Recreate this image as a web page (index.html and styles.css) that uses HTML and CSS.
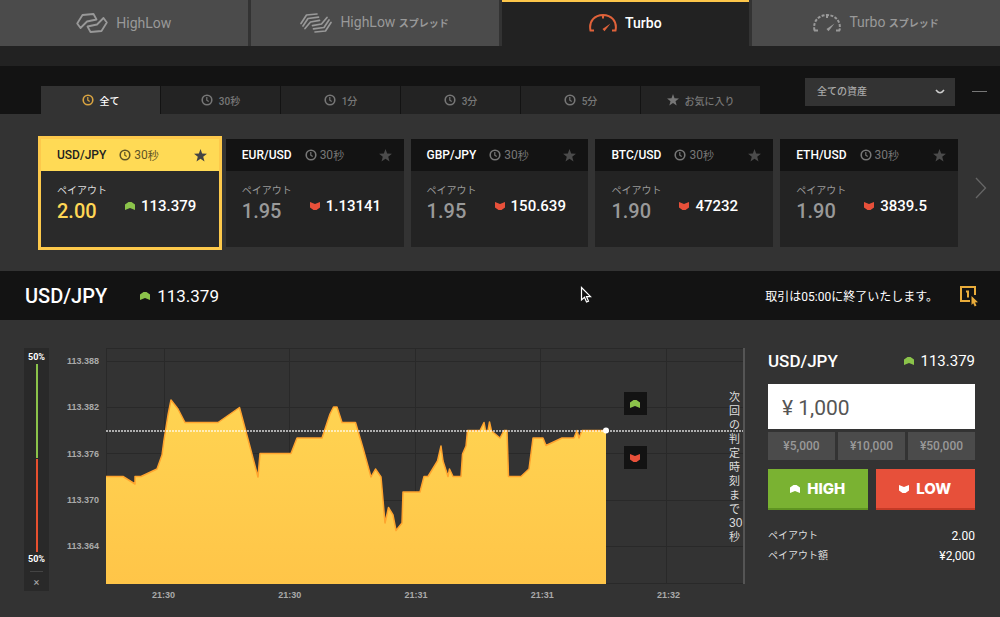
FILE: index.html
```html
<!DOCTYPE html>
<html lang="ja">
<head>
<meta charset="utf-8">
<meta name="viewport" content="width=device-width, initial-scale=1">
<title>Turbo USD/JPY</title>
<link rel="stylesheet" href="styles.css">
</head>
<body>
<svg class="defs" aria-hidden="true">
  <symbol id="clock" viewBox="0 0 12 12"><circle cx="6" cy="6" r="4.800" fill="none" stroke="currentColor" stroke-width="1.600"/><path d="M5.800 3v3.300l1.900 1.300" fill="none" stroke="currentColor" stroke-width="1.200"/></symbol>
  <symbol id="star" viewBox="0 0 12 12"><path d="M6 0l1.500 4.200 4.500.2-3.500 2.800 1.200 4.400L6 9.100l-3.700 2.500 1.200-4.400L0 4.400l4.500-.2z" fill="currentColor"/></symbol>
  <symbol id="up" viewBox="0 0 10 8"><path d="M0 2.500L3.500 0h3L10 2.500V8L5 6 0 8z" fill="currentColor"/></symbol>
  <symbol id="down" viewBox="0 0 10 8"><path d="M0 0l5 2L10 0v5.500L6.500 8h-3L0 5.500z" fill="currentColor"/></symbol>
</svg>

<nav class="modes">
  <button class="mode" type="button">
    <svg class="mode-icon" viewBox="0 0 32 20" fill="none" stroke="currentColor" stroke-width="1.800" stroke-linejoin="round"><path d="M1.200 10.500L6.500 2l11-1 3 5.500-9.500 2L4.500 15zM30.800 9.500L25.500 18l-11 1-3-5.500 9.500-2L27.500 5z"/></svg>
    <span>HighLow</span>
  </button>
  <button class="mode" type="button">
    <svg class="mode-icon" viewBox="0 0 32 20" fill="none" stroke="currentColor" stroke-width="1.700" stroke-linejoin="round" stroke-linecap="round"><path d="M1 10.500L6.500 2l10.500-1M3 13L8 5.500l10.500-1.300M5 15.500L10.500 9l9-1.700M31 9.500L25.500 18 15 19M29 7l-5 7.500-10.500 1.300M27 4.500L21.500 11l-9 1.700"/></svg>
    <span>HighLow <small>スプレッド</small></span>
  </button>
  <button class="mode active" type="button">
    <svg class="mode-icon dial" viewBox="0 0 28 18" fill="none" stroke="currentColor" stroke-width="2"><path d="M5 16.500H1.500C-.5 7 6 1 14 1s14.500 6 12.500 15.500H23M14 1v3.500"/><path d="M21.500 9.500l-8 5.500 2 2.200z" fill="currentColor" stroke="none"/></svg>
    <span>Turbo</span>
  </button>
  <button class="mode" type="button">
    <svg class="mode-icon dial" viewBox="0 0 28 18" fill="none" stroke="currentColor" stroke-width="2"><path d="M1.500 16.500C-.5 7 6 1 14 1s14.500 6 12.500 15.500" stroke-dasharray="3 1.400"/><path d="M5 16.500H1M23 16.500h4M14 1v3"/><path d="M21.500 9.500l-8 5.500 2 2.200z" fill="currentColor" stroke="none"/></svg>
    <span>Turbo <small>スプレッド</small></span>
  </button>
</nav>

<div class="filters">
  <div class="filter-tabs">
    <button class="filter active" type="button"><svg class="i12"><use href="#clock"/></svg><span>全て</span></button>
    <button class="filter" type="button"><svg class="i12"><use href="#clock"/></svg><span>30秒</span></button>
    <button class="filter" type="button"><svg class="i12"><use href="#clock"/></svg><span>1分</span></button>
    <button class="filter" type="button"><svg class="i12"><use href="#clock"/></svg><span>3分</span></button>
    <button class="filter" type="button"><svg class="i12"><use href="#clock"/></svg><span>5分</span></button>
    <button class="filter" type="button"><svg class="i12"><use href="#star"/></svg><span>お気に入り</span></button>
  </div>
  <div class="filter-side">
    <div class="asset-select">
      <select aria-label="資産"><option>全ての資産</option></select>
      <svg class="chevron" viewBox="0 0 10 6"><path d="M1 1q4 5.500 8 0" fill="none" stroke="currentColor" stroke-width="1.500"/></svg>
    </div>
    <button class="collapse" type="button" aria-label="折りたたむ"></button>
  </div>
</div>

<section class="assets">
  <div class="cards">
    <article class="card selected">
      <header><h2>USD/JPY</h2><span class="term"><svg class="i12"><use href="#clock"/></svg>30<small>秒</small></span><svg class="star"><use href="#star"/></svg></header>
      <div class="card-body"><div class="payout"><span>ペイアウト</span><strong>2.00</strong></div><div class="rate"><svg class="arrow green"><use href="#up"/></svg>113.379</div></div>
    </article>
    <article class="card">
      <header><h2>EUR/USD</h2><span class="term"><svg class="i12"><use href="#clock"/></svg>30<small>秒</small></span><svg class="star"><use href="#star"/></svg></header>
      <div class="card-body"><div class="payout"><span>ペイアウト</span><strong>1.95</strong></div><div class="rate"><svg class="arrow red"><use href="#down"/></svg>1.13141</div></div>
    </article>
    <article class="card">
      <header><h2>GBP/JPY</h2><span class="term"><svg class="i12"><use href="#clock"/></svg>30<small>秒</small></span><svg class="star"><use href="#star"/></svg></header>
      <div class="card-body"><div class="payout"><span>ペイアウト</span><strong>1.95</strong></div><div class="rate"><svg class="arrow red"><use href="#down"/></svg>150.639</div></div>
    </article>
    <article class="card">
      <header><h2>BTC/USD</h2><span class="term"><svg class="i12"><use href="#clock"/></svg>30<small>秒</small></span><svg class="star"><use href="#star"/></svg></header>
      <div class="card-body"><div class="payout"><span>ペイアウト</span><strong>1.90</strong></div><div class="rate"><svg class="arrow red"><use href="#down"/></svg>47232</div></div>
    </article>
    <article class="card">
      <header><h2>ETH/USD</h2><span class="term"><svg class="i12"><use href="#clock"/></svg>30<small>秒</small></span><svg class="star"><use href="#star"/></svg></header>
      <div class="card-body"><div class="payout"><span>ペイアウト</span><strong>1.90</strong></div><div class="rate"><svg class="arrow red"><use href="#down"/></svg>3839.5</div></div>
    </article>
  </div>
  <button class="next" type="button" aria-label="次へ"><svg viewBox="0 0 12 22"><path d="M1 1l9.500 10L1 21" fill="none" stroke="currentColor" stroke-width="1.300"/></svg></button>
</section>

<section class="title-bar">
  <h1>USD/JPY</h1>
  <span class="title-rate"><svg class="arrow green"><use href="#up"/></svg>113.379</span>
  <p>取引は05:00に終了いたします。</p>
  <button class="one-click" type="button" aria-label="ワンクリック注文"><svg viewBox="0 0 20 22"><path d="M16 10V2H2v14h9" fill="none" stroke="currentColor" stroke-width="2"/><path d="M7 6.500h2v6" fill="none" stroke="currentColor" stroke-width="2"/><path d="M12.500 11l6.500 6.200-3 .3 1.500 3-1.800.9-1.500-3.200-1.700 1.800z" fill="currentColor"/></svg></button>
</section>

<main class="trade">
  <aside class="sentiment">
    <b>50%</b>
    <div class="meter"><i class="meter-high"></i><i class="meter-low"></i></div>
    <b>50%</b>
    <hr>
    <button type="button" aria-label="閉じる">×</button>
  </aside>

  <div class="y-axis"><span>113.388</span><span>113.382</span><span>113.376</span><span>113.370</span><span>113.364</span></div>

  <div class="chart">
    <div class="plot">
      <svg class="series" viewBox="106 348 637 236" preserveAspectRatio="none">
        <defs><linearGradient id="fill" x1="0" y1="0" x2="0" y2="1"><stop offset="0" stop-color="#ffd452"/><stop offset="1" stop-color="#ffc548"/></linearGradient></defs>
        <path class="grid" d="M106 348.500H743M106 361.500H743M106 407.500H743M106 453.500H743M106 500.500H743M106 546.500H743M106 583.500H743M106.500 348V584M164.500 348V584M289.500 348V584M415.500 348V584M540.500 348V584M666.500 348V584"/>
        <path fill="url(#fill)" d="M106 476.500H123L135 484V476.500H141L157 469L162 455L164 440L168 415L171 400L178 409L185 422.500H218L239.500 407.500L249 443L258 477L260 453.500H291L297 438H322L330 414L333.500 407H337L342 422.500H355.500L363 448L371 477L375.500 469L381 477L385 523L388.500 507.500L393 515L396 530.500L402 523L403 492H420L424 476.500H428L437.500 461L441 446L443 461L448 476.500L449.500 469L453 476.500H461L462.500 454L466 446L467.500 430.500H480L484 422.500L485.500 430.500H488L489.500 422L491.500 431L500 438L504 430.500H507L508.500 476.500H521L529 469L533 438H543L546 445.500L562 438H574L577 430.500L579 438L582 430.500H606V584H106Z"/>
        <path class="line" d="M106 476.500H123L135 484V476.500H141L157 469L162 455L164 440L168 415L171 400L178 409L185 422.500H218L239.500 407.500L249 443L258 477L260 453.500H291L297 438H322L330 414L333.500 407H337L342 422.500H355.500L363 448L371 477L375.500 469L381 477L385 523L388.500 507.500L393 515L396 530.500L402 523L403 492H420L424 476.500H428L437.500 461L441 446L443 461L448 476.500L449.500 469L453 476.500H461L462.500 454L466 446L467.500 430.500H480L484 422.500L485.500 430.500H488L489.500 422L491.500 431L500 438L504 430.500H507L508.500 476.500H521L529 469L533 438H543L546 445.500L562 438H574L577 430.500L579 438L582 430.500H606"/>
        <path class="strike" d="M106 431H743"/>
        <circle cx="606" cy="430.500" r="3" fill="#fff"/>
      </svg>
      <span class="marker marker-up"><svg class="arrow green"><use href="#up"/></svg></span>
      <span class="marker marker-down"><svg class="arrow red"><use href="#down"/></svg></span>
      <p class="countdown">次回の判定時刻まで<span>30</span>秒</p>
    </div>
    <div class="x-axis"><span>21:30</span><span>21:30</span><span>21:31</span><span>21:31</span><span>21:32</span></div>
  </div>

  <form class="order">
    <div class="order-head"><h2>USD/JPY</h2><span><svg class="arrow green"><use href="#up"/></svg>113.379</span></div>
    <input class="amount" type="text" aria-label="金額" value="¥ 1,000">
    <div class="quick"><button type="button">¥5,000</button><button type="button">¥10,000</button><button type="button">¥50,000</button></div>
    <div class="sides">
      <button class="high" type="button"><svg class="arrow"><use href="#up"/></svg>HIGH</button>
      <button class="low" type="button"><svg class="arrow"><use href="#down"/></svg>LOW</button>
    </div>
    <dl><div><dt>ペイアウト</dt><dd>2.00</dd></div><div><dt>ペイアウト額</dt><dd>¥2,000</dd></div></dl>
  </form>
</main>

<svg class="pointer" viewBox="0 0 12 18" aria-hidden="true"><path d="M1.500 1.500v12.500l3-2.700 2 4.700 2-.9-2-4.500h4z" fill="#111" stroke="#fff" stroke-width="1.200"/></svg>
</body>
</html>
```
FILE: styles.css
```css
* { box-sizing: border-box; }
body {
  margin: 0;
  background: #333;
  color: #fff;
  font-family: Roboto, "Noto Sans CJK JP", sans-serif;
  font-size: 12px;
}
h1, h2, p, dl, dd { margin: 0; }
button, input, select {
  margin: 0;
  padding: 0;
  border: 0;
  border-radius: 0;
  background: none;
  color: inherit;
  font: inherit;
}
svg { flex: none; display: block; }
.defs { position: absolute; width: 0; height: 0; }
.i12 { width: 12px; height: 12px; }
.arrow { width: 10px; height: 8px; }
.green { color: #8bc34a; }
.red { color: #e8503a; }

/* Mode tabs */
.modes {
  display: grid;
  grid-template-columns: repeat(4, 1fr);
  column-gap: 3px;
  padding-bottom: 20px;
  background: linear-gradient(#333 46px, #222 46px);
}
.mode {
  display: flex;
  align-items: center;
  justify-content: center;
  gap: 8px;
  height: 46px;
  background: #4b4b4b;
  color: #999;
  font-size: 14px;
}
.mode span { line-height: 20px; padding-bottom: 1px; }
.mode small { font-size: 10px; font-weight: 700; }
.mode.active {
  padding-bottom: 2px;
  border-top: 2px solid #fdc64a;
  background: #222;
  color: #fff;
  font-weight: 500;
}
.mode.active .mode-icon { color: #e0623a; }
.mode-icon { width: 32px; height: 20px; }
.mode-icon.dial { width: 28px; height: 18px; }

/* Filters */
.filters {
  display: flex;
  justify-content: space-between;
  height: 48px;
  padding: 0 13px 0 41px;
  background: #131313;
}
.filter-tabs {
  display: grid;
  grid-template-columns: repeat(6, 119px);
  gap: 1px;
  align-self: end;
}
.filter {
  display: flex;
  align-items: center;
  justify-content: center;
  gap: 6px;
  height: 28px;
  background: #232323;
  color: #777;
  font-size: 10px;
  font-weight: 500;
}
.filter.active { background: #333; color: #fff; }
.filter.active .i12 { color: #d9a441; }
.filter-side { display: flex; align-items: center; gap: 17px; padding-top: 3px; }
.asset-select { display: grid; align-items: center; color: #aaa; }
.asset-select > * { grid-area: 1 / 1; }
.asset-select select {
  appearance: none;
  width: 150px;
  height: 28px;
  padding: 0 12px;
  background: #333;
  font-size: 10px;
  font-weight: 500;
}
.chevron { justify-self: end; width: 10px; height: 6px; margin-right: 10px; pointer-events: none; color: #ccc; }
.collapse { width: 15px; height: 1px; background: #777; }

/* Asset cards */
.assets { display: flex; align-items: center; padding: 25px 13px 24px 41px; }
.cards { flex: 1; display: grid; grid-template-columns: repeat(5, 1fr); gap: 7px; }
.card { height: 108px; background: #232323; }
.card header {
  display: flex;
  align-items: center;
  height: 32px;
  padding: 0 12px 0 16px;
  background: #131313;
}
.card h2 { font-size: 12px; font-weight: 500; }
.term { display: flex; align-items: center; gap: 3px; margin-left: 13px; color: #777; }
.term small { margin-left: -3px; font-size: 11px; }
.star { width: 13px; height: 13px; margin-left: auto; color: #4b4b4b; }
.card-body {
  display: grid;
  grid-template-columns: 68px 1fr;
  align-items: center;
  padding: 12px 0 0 16px;
}
.payout { display: grid; color: #999; }
.payout span { font-size: 10px; line-height: 16px; }
.payout strong { font-size: 20px; font-weight: 500; line-height: 24px; }
.rate { display: flex; align-items: center; gap: 6px; padding-top: 6px; font-size: 15px; font-weight: 500; line-height: 20px; }
.card.selected { outline: 3px solid #fdc94b; background: #2a2a2a; }
.selected header { background: #ffda55; color: #222; }
.selected .term { color: #5f5425; }
.selected .star { color: #444; }
.selected .payout span { color: #ddd; }
.selected .payout strong { color: #ffd755; }
.next { width: 12px; margin-left: 17px; padding-bottom: 10px; color: #666; }
.next svg { width: 12px; height: 22px; }

/* Title bar */
.title-bar {
  display: flex;
  align-items: center;
  height: 49px;
  padding: 0 21px 0 25px;
  background: #131313;
}
.title-bar h1 { font-size: 20px; font-weight: 500; }
.title-rate { display: flex; align-items: center; gap: 7px; margin-left: 33px; font-size: 17px; }
.title-bar p { margin-left: auto; font-size: 12px; }
.one-click { margin-left: 21px; color: #e9ac3b; }
.one-click svg { width: 20px; height: 22px; }

/* Trading area */
.trade { display: flex; align-items: flex-start; padding: 28px 25px 16px 24px; }
.sentiment {
  display: flex;
  flex-direction: column;
  align-items: center;
  width: 25px;
  padding-top: 2px;
  background: #292929;
}
.sentiment b { font-size: 9px; line-height: 14px; }
.meter { display: grid; gap: 1px; width: 2px; height: 188px; }
.meter-high { background: #8bc34a; }
.meter-low { background: #e8502f; }
.sentiment hr { width: 13px; margin: 5px 0 3px; border: 0; border-top: 1px solid #444; }
.sentiment button { height: 16px; color: #aaa; font-size: 11px; line-height: 16px; }
.y-axis, .x-axis {
  display: flex;
  justify-content: space-between;
  color: #aaa;
  font: bold 9px/12px "Liberation Sans", sans-serif;
}
.y-axis { flex-direction: column; align-items: flex-end; width: 57px; height: 236px; padding: 7px 7px 32px 0; }
.chart { flex: 1; }
.plot { position: relative; height: 236px; border-right: 2px solid #555; }
.series { width: 100%; height: 100%; overflow: visible; }
.grid { fill: none; stroke: #292929; }
.line { fill: none; stroke: #ffa42e; stroke-width: 1.500; stroke-linejoin: round; }
.strike { fill: none; stroke: #fff; stroke-width: 2; stroke-dasharray: 2 1; opacity: .6; }
.marker {
  position: absolute;
  left: 81.3%;
  display: grid;
  place-items: center;
  width: 23px;
  height: 23px;
  background: #131313;
}
.marker-up { top: 44px; }
.marker-down { top: 98px; }
.countdown {
  position: absolute;
  top: 42px;
  right: 0;
  width: 14px;
  color: #ddd;
  font: 11px/14px "Liberation Sans", "Noto Sans CJK JP", sans-serif;
}
.countdown span { font-size: 12px; }
.x-axis { padding: 5px 65px 0 46px; }

/* Order form */
.order { width: 207px; margin-left: 23px; }
.order-head { display: flex; align-items: center; justify-content: space-between; height: 26px; }
.order-head h2 { font-size: 17px; font-weight: 500; }
.order-head span { display: flex; align-items: center; gap: 6px; font-size: 15px; }
.amount {
  display: block;
  width: 100%;
  height: 45px;
  margin-top: 10px;
  padding: 3px 14px 0;
  background: #fff;
  color: #555;
  font-size: 21px;
}
.quick { display: grid; grid-template-columns: repeat(3, 1fr); gap: 3px; margin-top: 3px; }
.quick button { height: 28px; background: #4b4b4b; color: #999; font-size: 12px; font-weight: 500; }
.sides { display: grid; grid-template-columns: 1fr 1fr; gap: 8px; margin: 9px 0 16px; }
.sides button {
  display: flex;
  align-items: center;
  justify-content: center;
  gap: 7px;
  height: 41px;
  font: 800 15px Inter, sans-serif;
}
.high { background: #7ab232; border-bottom: 2px solid #5f9422; }
.low { background: #e7503a; border-bottom: 2px solid #c43a26; }
.order dl div { display: flex; justify-content: space-between; line-height: 20px; }
.order dt { font-size: 10px; color: #ddd; }

.pointer { position: absolute; left: 580px; top: 286px; width: 12px; height: 18px; }
```
